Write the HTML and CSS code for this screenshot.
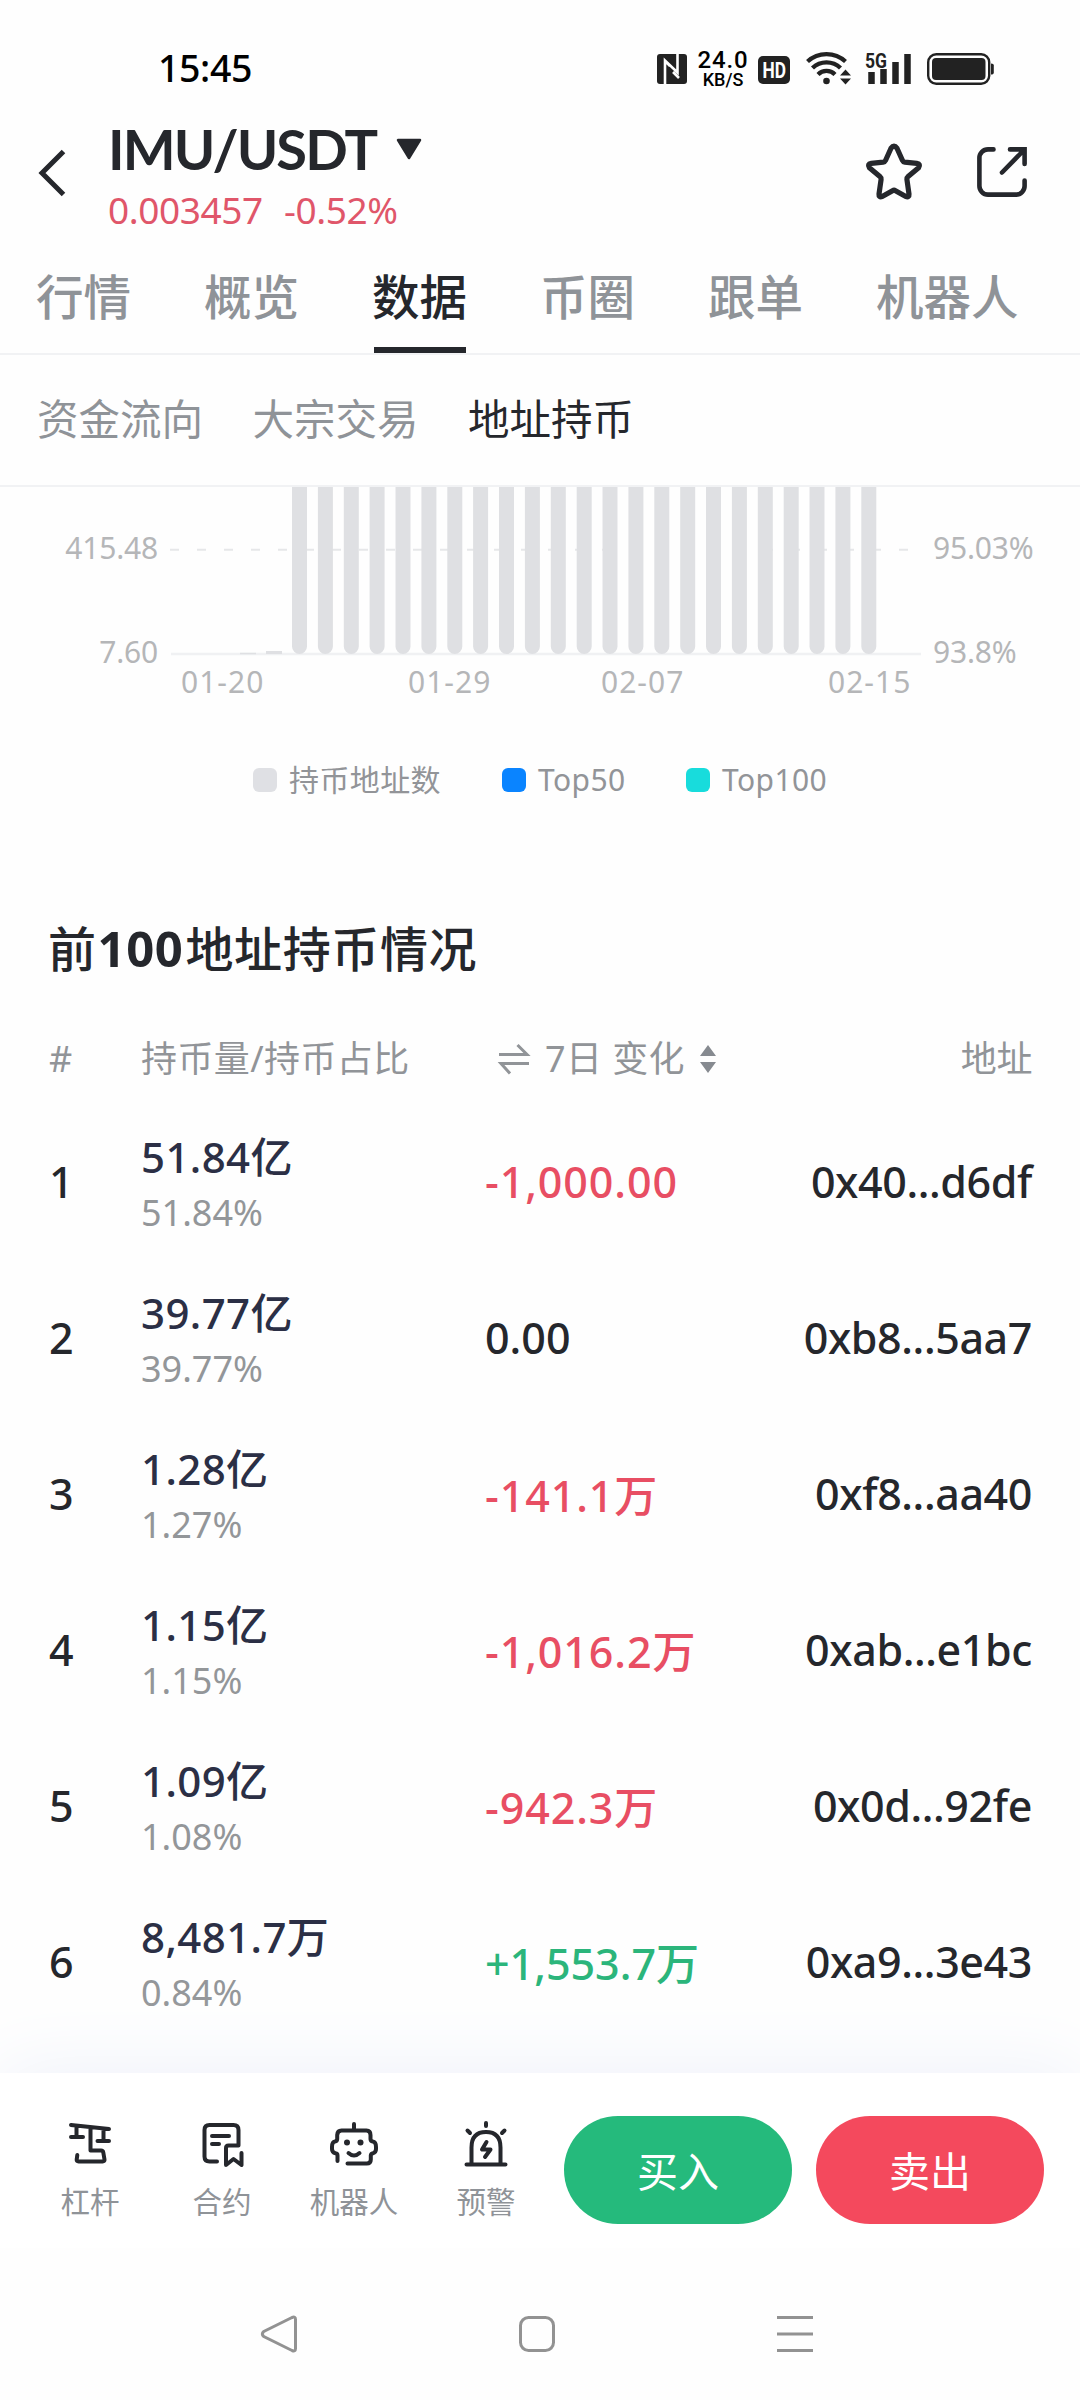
FILE: index.html
```html
<!DOCTYPE html>
<html lang="zh-CN">
  <head>
    <meta charset="UTF-8" />
    <meta name="viewport" content="width=device-width, initial-scale=1.0" />
    <title>IMU/USDT</title>
    <link rel="stylesheet" href="styles.css">
  </head>
  <body>
    <div class="status-bar">
      <span class="time">15:45</span>
      <div class="status-icons">
        <svg class="nfc" width="30" height="30" viewBox="0 0 30 30">
          <rect width="30" height="30" rx="3" fill="#222" />
          <path d="M8 30V6.500l12.500 12V0M8 7l5 5M22 24l-6-6" fill="none" stroke="#fff" stroke-width="2.600" />
        </svg>
        <div class="speed">
          <span class="speed-value">24.0</span>
          <span class="speed-unit">KB/S</span>
        </div>
        <svg class="hd" width="32" height="28" viewBox="0 0 32 28">
          <rect width="32" height="28" rx="5" fill="#222" />
          <text x="4.500" y="22" textLength="23.500" lengthAdjust="spacingAndGlyphs">HD</text>
        </svg>
        <svg class="wifi" width="46" height="34" viewBox="0 0 46 34">
          <g fill="none" stroke="#222" stroke-width="4.300">
            <path d="M1.500 10.500a28 28 0 0 1 38 0" />
            <path d="M6.500 17a20 20 0 0 1 28 0" />
            <path d="M12 23.500a12 12 0 0 1 17 0" />
          </g>
          <circle cx="20.500" cy="30" r="3.300" fill="#222" />
          <path d="M34 24.500h11l-5.500-6zM34 27.500h11l-5.500 6z" fill="#222" />
        </svg>
        <svg class="signal" width="47" height="33" viewBox="0 0 47 33">
          <text x="0" y="15.500" textLength="22" lengthAdjust="spacingAndGlyphs">5G</text>
          <path d="M6.500 20v12M18.500 17v15M30.500 10v22M42.500 2v30" stroke="#222" stroke-width="6.500" />
        </svg>
        <svg class="battery" width="67" height="32" viewBox="0 0 67 32">
          <rect x="1.200" y="1.200" width="61" height="29.600" rx="8" fill="none" stroke="#222" stroke-width="2.400" />
          <rect x="5" y="5" width="53.500" height="22" rx="4" fill="#222" />
          <path d="M64 10.500q2.800 0 2.800 2v7q0 2-2.800 2z" fill="#222" />
        </svg>
      </div>
    </div>

    <header class="header">
      <svg class="back" width="28" height="46" viewBox="0 0 28 46">
        <path d="M26.500 1.500 5 23l21.500 21.500" fill="none" stroke="#25272c" stroke-width="5" />
      </svg>
      <div class="pair">
        <h1>
          IMU/USDT
          <svg width="26" height="22" viewBox="0 0 26 22">
            <path d="M2 2h22L13 20z" fill="#25272c" stroke="#25272c" stroke-width="2.500" stroke-linejoin="round" />
          </svg>
        </h1>
        <div class="price"><span>0.003457</span><span>-0.52%</span></div>
      </div>
      <svg class="star" width="56" height="56" viewBox="0 0 56 56">
        <path d="M25 5.200q3-4.400 6 0l5.500 12.300q.7 1.500 2.300 1.700l12 1.200q4.200.7 1.800 4.300l-10.500 8.800q-1.400 1.200-1.200 2.800l2.100 14.800q.3 3.600-3.200 2.500l-10.300-5.900q-1.500-.9-3 0l-10.300 5.900q-3.500 1.100-3.200-2.500l2.100-14.800q.2-1.600-1.200-2.800L3.400 24.700q-2.400-3.600 1.800-4.300l12-1.200q1.600-.2 2.300-1.700z" fill="none" stroke="#25272c" stroke-width="5.200" stroke-linejoin="round" />
      </svg>
      <svg class="share" width="50" height="50" viewBox="0 0 50 50">
        <path d="M16.500 2.400H11a8.600 8.600 0 0 0-8.600 8.600v28A8.600 8.600 0 0 0 11 47.600h28a8.600 8.600 0 0 0 8.600-8.600v-5.500M33 2.400h14.600V17M47 3 25 25.500" fill="none" stroke="#25272c" stroke-width="4.600" stroke-linecap="round" />
      </svg>
    </header>

    <nav class="tabs">
      <a>行情</a>
      <a>概览</a>
      <a class="active">数据</a>
      <a>币圈</a>
      <a>跟单</a>
      <a>机器人</a>
    </nav>

    <nav class="sub-tabs">
      <a>资金流向</a>
      <a>大宗交易</a>
      <a class="active">地址持币</a>
    </nav>

    <main class="content">
      <svg class="chart" width="1080" height="233" viewBox="0 0 1080 233">
        <path d="M170 62.800H910" stroke="#e6e7e9" stroke-width="2" stroke-dasharray="9 18" />
        <path d="M171 167H921" stroke="#f0f1f3" stroke-width="2.500" />
        <path d="M240 166.500h16" stroke="#dfe0e3" stroke-width="1.500" />
        <path d="M266 165.500h16" stroke="#dfe0e3" stroke-width="3" />
        <!-- daily bars, cut off by the top of the scroll area -->
        <path class="bars" d="M299.500 0V159.500M325.400 0V159.500M351.300 0V159.500M377.100 0V159.500M403 0V159.500M428.900 0V159.500M454.800 0V159.500M480.600 0V159.500M506.500 0V159.500M532.400 0V159.500M558.300 0V159.500M584.200 0V159.500M610 0V159.500M635.900 0V159.500M661.800 0V159.500M687.700 0V159.500M713.500 0V159.500M739.400 0V159.500M765.300 0V159.500M791.200 0V159.500M817 0V159.500M842.900 0V159.500M868.800 0V159.500" />
        <g class="axis">
          <text x="158" y="72" text-anchor="end">415.48</text>
          <text x="158" y="176" text-anchor="end">7.60</text>
          <text x="933" y="72">95.03%</text>
          <text x="933" y="176">93.8%</text>
        </g>
        <g class="axis dates">
          <text x="181" y="206">01-20</text>
          <text x="408" y="206">01-29</text>
          <text x="601" y="206">02-07</text>
          <text x="828" y="206">02-15</text>
        </g>
      </svg>

      <div class="legend">
        <span class="holders">持币地址数</span>
        <span class="top50">Top50</span>
        <span class="top100">Top100</span>
      </div>

      <h2>前<b>100</b>地址持币情况</h2>

      <div class="row head">
        <span>#</span>
        <span>持币量/持币占比</span>
        <span class="sort">
          <svg width="32" height="32" viewBox="0 0 32 32">
            <path d="M19.500 2 29 11.500H1M12 30.500 3 20.500h28" fill="none" stroke="#919498" stroke-width="3" />
          </svg>
          <span>7日 变化</span>
          <svg width="16" height="28" viewBox="0 0 16 28">
            <path d="M0 11 8 0l8 11zM0 17l8 11 8-11z" fill="#868a90" />
          </svg>
        </span>
        <span class="address">地址</span>
      </div>
      <div class="row">
        <span>1</span>
        <div class="amount">51.84亿<small>51.84%</small></div>
        <span class="change down">-1,000.00</span>
        <span class="address">0x40...d6df</span>
      </div>
      <div class="row">
        <span>2</span>
        <div class="amount">39.77亿<small>39.77%</small></div>
        <span class="change">0.00</span>
        <span class="address">0xb8...5aa7</span>
      </div>
      <div class="row">
        <span>3</span>
        <div class="amount">1.28亿<small>1.27%</small></div>
        <span class="change down unit">-141.1万</span>
        <span class="address">0xf8...aa40</span>
      </div>
      <div class="row">
        <span>4</span>
        <div class="amount">1.15亿<small>1.15%</small></div>
        <span class="change down unit">-1,016.2万</span>
        <span class="address">0xab...e1bc</span>
      </div>
      <div class="row">
        <span>5</span>
        <div class="amount">1.09亿<small>1.08%</small></div>
        <span class="change down unit">-942.3万</span>
        <span class="address">0x0d...92fe</span>
      </div>
      <div class="row">
        <span>6</span>
        <div class="amount">8,481.7万<small>0.84%</small></div>
        <span class="change up unit">+1,553.7万</span>
        <span class="address">0xa9...3e43</span>
      </div>
    </main>

    <footer class="trade-bar">
      <a class="tool">
        <svg width="48" height="48" viewBox="0 0 48 48">
          <path d="M5 5l38 4M10.500 6v11M5 17h12M37.500 9v12M31.500 21h11.500M24.500 8v22.500h10.500q2 0 2.300 2l1.200 7q.2 2-1.800 2H12.500q-2 0-1.800-2l.6-4.500" />
        </svg>
        杠杆
      </a>
      <a class="tool">
        <svg width="48" height="48" viewBox="0 0 48 48">
          <path d="M19 41.500h-7.500q-5 0-5-5V10q0-5 5-5h24q5 0 5 5v15.500H30.500q-2.500 0-2.500 2.500v17l7.500-6 8 6V33M14 16h17M14 24h7" />
        </svg>
        合约
      </a>
      <a class="tool">
        <svg width="48" height="48" viewBox="0 0 48 48">
          <path d="M24 4v6M7.500 41v-5.500q0-2-2-2.300Q2 32.500 2 29v-2q0-5 3-5.500 2-.3 2.200-2.500v-4q.3-4.500 4.300-4.500h25q4 0 4 4.500v4q.2 2.200 2.200 2.500 3.300.5 3.300 5.500v2q0 3.500-3 4.200-2 .3-2.200 2.300v4q0 4-4 4H17.500M18.500 33q5.500 5 11 0" />
          <circle cx="17" cy="22.500" r="3" />
          <circle cx="30.500" cy="22.500" r="3" />
        </svg>
        机器人
      </a>
      <a class="tool">
        <svg width="48" height="48" viewBox="0 0 48 48">
          <path d="M4.500 44.500h39M9.500 44V27.500Q9.500 12 24 12t14.500 15.500V44M24 3v3M5.500 10.500l2.500 2.500M42.500 10.500 40 13M24.500 22l-4.500 7.500h8.500l-5.500 7.500" />
        </svg>
        预警
      </a>
      <button class="buy">买入</button>
      <button class="sell">卖出</button>
    </footer>

    <div class="nav-bar">
      <svg width="38" height="38" viewBox="0 0 38 38">
        <path d="M32 2.500 3.800 16.500q-3 2.500 0 5L32 35.500q3.500 1.500 3.500-2V4.500q0-3.500-3.500-2z" />
      </svg>
      <svg width="38" height="38" viewBox="0 0 38 38">
        <rect x="2.500" y="2.500" width="33" height="33" rx="8" />
      </svg>
      <svg width="38" height="38" viewBox="0 0 38 38">
        <path d="M1 2.500h36M1 19h36M1 35.500h36" />
      </svg>
    </div>
  </body>
</html>
```
FILE: styles.css
```css
* {
  box-sizing: border-box;
}
body {
  margin: 0;
  width: 1080px;
  height: 2400px;
  overflow: hidden;
  display: flex;
  flex-direction: column;
  background: #fefefe;
  color: #25272c;
  font-family: "Noto Sans", "Noto Sans CJK SC", sans-serif;
}
svg {
  display: block;
  flex: none;
  overflow: visible;
}

.status-bar {
  display: flex;
  justify-content: space-between;
  height: 110px;
  padding: 47px 86px 0 158px;
}
.time {
  font-size: 37.5px;
  font-weight: 500;
  line-height: 42px;
  letter-spacing: -0.4px;
  color: #000;
}
.status-icons {
  display: flex;
  align-items: flex-start;
  height: 42px;
}
.nfc {
  margin: 7px 11px 0 0;
}
.speed {
  display: flex;
  flex-direction: column;
  align-items: center;
  width: 50px;
  margin: 3px 10px 0 0;
  color: #000;
  font-family: Roboto, sans-serif;
}
.speed-value {
  font-size: 24px;
  font-weight: 500;
  line-height: 21px;
  letter-spacing: 0.8px;
}
.speed-unit {
  font-size: 18px;
  font-weight: 500;
  line-height: 18px;
}
.hd {
  margin: 9px 16px 0 0;
}
.hd text {
  font: bold 22px Roboto, sans-serif;
  fill: #fff;
}
.wifi {
  margin: 4px 13px 0 0;
}
.signal {
  margin: 5px 15px 0 0;
}
.signal text {
  font: bold 21px Roboto, sans-serif;
  fill: #222;
}
.battery {
  margin-top: 6px;
}

.header {
  display: flex;
  height: 140px;
  padding: 0 53px 0 37px;
}
.back {
  margin-top: 40px;
}
.pair {
  flex: 1;
  padding: 7px 0 0 43px;
}
h1 {
  display: flex;
  align-items: center;
  gap: 20px;
  margin: 0;
  font-family: Lato, sans-serif;
  font-size: 56px;
  font-weight: 700;
  line-height: 64px;
  letter-spacing: -1.9px;
}
.price {
  display: flex;
  gap: 21px;
  margin-top: 9px;
  font-size: 37px;
  line-height: 40px;
  letter-spacing: -0.4px;
  color: #e0566a;
}
.star {
  margin: 33px 55px 0 0;
}
.share {
  margin-top: 37px;
}

.tabs {
  display: flex;
  gap: 73px;
  height: 105px;
  padding-left: 36px;
  border-bottom: 2px solid #f1f2f4;
  font-size: 47.5px;
  font-weight: 500;
  line-height: 94px;
  color: #8f9398;
}
.tabs .active {
  color: #25272c;
  background: linear-gradient(#25272c, #25272c) center bottom / 92px 6px no-repeat;
}

.sub-tabs {
  display: flex;
  gap: 49.5px;
  height: 132px;
  padding-left: 37px;
  border-bottom: 2px solid #f1f2f4;
  font-size: 41.5px;
  line-height: 128px;
  color: #8f9398;
}
.sub-tabs .active {
  color: #25272c;
}

.content {
  height: 1586px;
  overflow: hidden;
}
.chart {
  overflow: hidden;
}
.bars {
  fill: none;
  stroke: #dfe0e3;
  stroke-width: 15;
  stroke-linecap: round;
}
.axis {
  font-size: 30px;
  letter-spacing: -0.2px;
  fill: #b5b6b8;
}
.dates {
  letter-spacing: 1px;
}

.legend {
  display: flex;
  margin-top: 40px;
  padding-left: 253px;
  font-size: 30px;
  line-height: 40px;
  letter-spacing: 0.4px;
  color: #929498;
}
.legend span {
  display: flex;
  align-items: center;
}
.legend span::before {
  content: "";
  width: 24px;
  height: 24px;
  margin-right: 12px;
  border-radius: 6px;
  background: #dfe0e4;
}
.legend .holders {
  width: 249px;
}
.legend .top50 {
  width: 184px;
}
.legend .top50::before {
  background: #0a84ff;
}
.legend .top100::before {
  background: #18dcdc;
}

h2 {
  margin: 118px 0 0 48px;
  font-size: 48px;
  font-weight: 500;
  line-height: 60px;
  letter-spacing: 0.6px;
}
h2 b {
  padding: 0 2px 0 1px;
  font-size: 49px;
}

.row {
  display: grid;
  grid-template-columns: 92px 344px 1fr 300px;
  align-items: center;
  height: 156px;
  padding: 0 48px 0 49px;
  font-size: 43px;
  font-weight: 500;
  line-height: 56px;
}
.row.head {
  height: 46px;
  margin: 52px 0 27px;
  font-size: 36px;
  font-weight: 400;
  letter-spacing: 0.4px;
  color: #919498;
}
.sort {
  display: flex;
  align-items: center;
  gap: 15px;
  padding-left: 13px;
}
.amount {
  padding-top: 6px;
  font-size: 42px;
  letter-spacing: 0.4px;
  color: #2b2f45;
}
.amount small {
  display: block;
  font-size: 36px;
  font-weight: 400;
  letter-spacing: 0;
  color: #939699;
}
.unit {
  padding-top: 4px;
}
.down {
  letter-spacing: 0.9px;
  color: #e84e63;
}
.up {
  color: #2bb57b;
}
.address {
  text-align: right;
  letter-spacing: -0.4px;
}

.trade-bar {
  display: flex;
  height: 175px;
  padding: 43px 36px 0 24px;
  background: #fff;
  box-shadow: 0 0 80px #eef1fa;
}
.tool {
  display: flex;
  flex-direction: column;
  align-items: center;
  width: 132px;
  padding-top: 4px;
  font-size: 29.5px;
  line-height: 40px;
  color: #8f9398;
}
.tool svg {
  margin-bottom: 14px;
}
.tool path {
  fill: none;
  stroke: #25272c;
  stroke-width: 4;
  stroke-linecap: round;
  stroke-linejoin: round;
}
.tool circle {
  fill: #25272c;
}
.trade-bar button {
  width: 228px;
  height: 108px;
  padding: 0 0 3px;
  border: none;
  border-radius: 54px;
  font-family: inherit;
  font-size: 41px;
  color: #fff;
}
.buy {
  margin: 0 24px 0 12px;
  background: #25ba7c;
}
.sell {
  background: #f4495d;
}

.nav-bar {
  flex: 1;
  display: flex;
  justify-content: center;
  gap: 220px;
  padding: 67px 6px 0 0;
  background: #fefefe;
  position: relative;
}
.nav-bar svg {
  fill: none;
  stroke: #929292;
  stroke-width: 3;
}
```
